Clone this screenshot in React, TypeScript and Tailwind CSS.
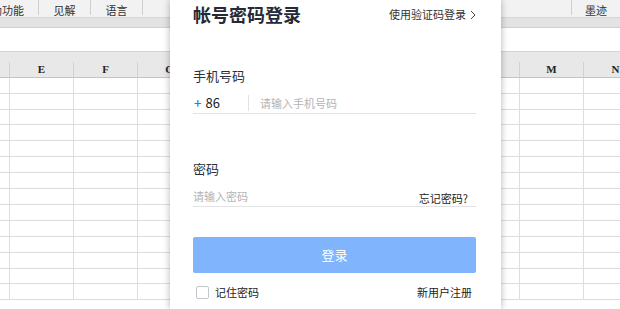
import React from 'react';

const font = { fontFamily: '"Noto Sans CJK SC", "Noto Sans", sans-serif' };

// only E, F, M, N letters show around the dialog
const cols = [
  { key: 'D', name: '', w: 'w-[63px]' },
  { key: 'E', name: 'E', w: 'w-[64px]' },
  { key: 'F', name: 'F', w: 'w-[64px]' },
  { key: 'G', name: 'G', w: 'w-[64px]' },
  { key: 'H', name: '', w: 'w-[63px]' },
  { key: 'I', name: '', w: 'w-[63px]' },
  { key: 'J', name: '', w: 'w-[64px]' },
  { key: 'K', name: '', w: 'w-[64px]' },
  { key: 'L', name: '', w: 'w-[64px]' },
  { key: 'M', name: 'M', w: 'w-[64px]' },
  { key: 'N', name: 'N', w: 'w-[64px]' },
];

const rows = [
  'h-[16px]', 'h-[16px]', 'h-[15px]', 'h-[16px]', 'h-[16px]', 'h-[16px]', 'h-[16px]',
  'h-[16px]', 'h-[16px]', 'h-[16px]', 'h-[16px]', 'h-[16px]', 'h-[15px]', 'h-[16px]',
];

const Sheet = () => {
  return (
    <div className="w-[620px] h-[309px] bg-white" style={font}>
      {/* toolbar tabs */}
      <div className="h-[18px] bg-[#f2f2f2] border-b border-[#d6d6d6] flex text-[11px] text-[#333] leading-[20px]">
        <div className="w-[38px] flex justify-end pr-[14px] overflow-hidden whitespace-nowrap">辅助功能</div>
        <div className="w-[1px] h-[15px] bg-[#cfcfcf]" />
        <div className="w-[51px] text-center">见解</div>
        <div className="w-[1px] h-[15px] bg-[#cfcfcf]" />
        <div className="w-[51px] text-center">语言</div>
        <div className="w-[1px] h-[15px] bg-[#cfcfcf]" />
        <div className="flex-1" />
        <div className="w-[1px] h-[15px] bg-[#cfcfcf]" />
        <div className="w-[48px] text-center">墨迹</div>
      </div>
      <div className="h-[10px] bg-[#e3e3e3] border-b border-[#d0d0d0]" />
      <div className="h-[24px] bg-white border-b border-[#d4d4d4]" />
      {/* column headers */}
      <div className="h-[26px] bg-[#e8e8e8] border-b border-[#c4c4c4] flex ml-[-53px] items-end">
        {cols.map((c) => (
          <div
            key={c.key}
            className={`${c.w} shrink-0 h-[15px] border-r border-[#d2d2d2] flex items-center justify-center text-[11px] font-bold text-[#222]`}
            style={{ fontFamily: '"Liberation Serif", serif' }}
          >
            {c.name}
          </div>
        ))}
      </div>
      {/* grid */}
      <div className="ml-[-53px]">
        {rows.map((h, i) => (
          <div key={i} className={`${h} flex border-b border-[#dcdcdc]`}>
            {cols.map((c) => (
              <div key={c.key} className={`${c.w} shrink-0 border-r border-[#dedede]`} />
            ))}
          </div>
        ))}
      </div>
    </div>
  );
};

const LoginBox = () => {
  return (
    <div
      className="absolute left-[170px] top-0 w-[331px] h-[309px] bg-white shadow-[0_0_7px_rgba(0,0,0,0.3)] pl-[23px] pr-[25px]"
      style={font}
    >
      <div className="h-[28px] flex items-center justify-between">
        <span className="text-[18px] font-bold text-[#262a37] leading-[28px]">帐号密码登录</span>
        <span className="flex items-center gap-[4px] text-[11px] text-[#333] mt-[1px]">
          使用验证码登录
          <svg width="6" height="10" viewBox="0 0 6 10" fill="none">
            <path d="M1 1l4 4-4 4" stroke="#444" strokeWidth="1" />
          </svg>
        </span>
      </div>

      <div className="mt-[38px] text-[13px] leading-[20px] text-[#2b2f3b]">手机号码</div>
      <div className="mt-[7px] h-[21px] flex items-center border-b border-[#e3e3e3]">
        <div className="w-[55px] flex items-center text-[13px]">
          <span className="text-[#2f78f5] ml-[1px] font-medium">+</span>
          <span className="text-[#222] ml-[4px]">86</span>
        </div>
        <div className="w-[1px] h-[16px] bg-[#e2e2e2]" />
        <span className="ml-[11px] text-[11px] text-[#b4b4b4]">请输入手机号码</span>
      </div>

      <div className="mt-[45px] text-[13px] leading-[20px] text-[#2b2f3b]">密码</div>
      <div className="mt-[7px] h-[21px] flex items-center justify-between border-b border-[#e3e3e3]">
        <span className="text-[11px] text-[#b4b4b4]">请输入密码</span>
        <span className="text-[11px] text-[#222] mt-[4px] mr-[8px]">忘记密码?</span>
      </div>

      <button className="mt-[30px] w-full h-[36px] rounded-[2px] bg-[#80b4fd] text-white text-[13px]">
        登录
      </button>

      <div className="mt-[9px] h-[20px] flex items-center justify-between">
        <label className="flex items-center gap-[6px] ml-[3px] text-[11px] text-[#222]">
          <span className="w-[13px] h-[13px] border border-[#c4c6ce] rounded-[2px] bg-white" />
          记住密码
        </label>
        <span className="text-[11px] text-[#222] mr-[4px]">新用户注册</span>
      </div>
    </div>
  );
};

export default function App() {
  return (
    <div className="relative w-[620px] h-[309px] overflow-hidden">
      <Sheet />
      <LoginBox />
    </div>
  );
}
